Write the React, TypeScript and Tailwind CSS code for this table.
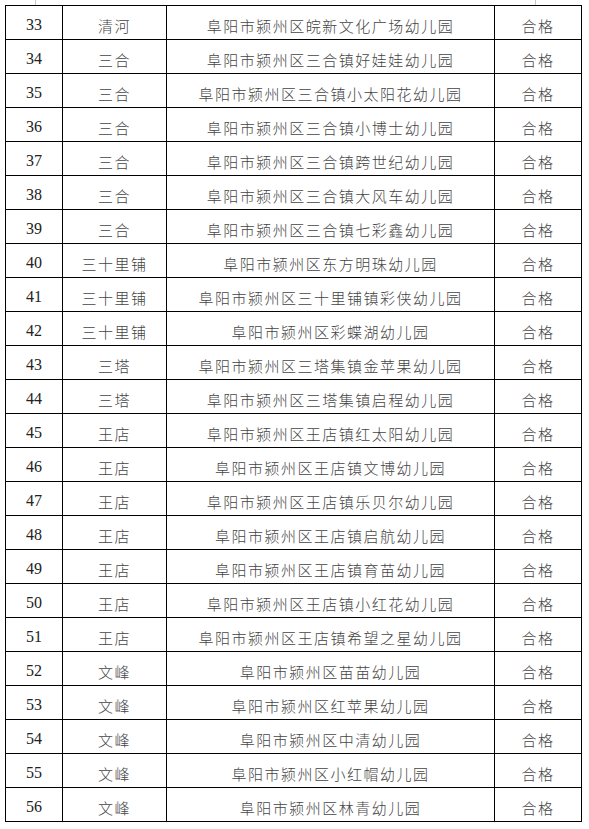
const rows: [number, string, string][] = [
  [33, "清河", "阜阳市颍州区皖新文化广场幼儿园"],
  [34, "三合", "阜阳市颍州区三合镇好娃娃幼儿园"],
  [35, "三合", "阜阳市颍州区三合镇小太阳花幼儿园"],
  [36, "三合", "阜阳市颍州区三合镇小博士幼儿园"],
  [37, "三合", "阜阳市颍州区三合镇跨世纪幼儿园"],
  [38, "三合", "阜阳市颍州区三合镇大风车幼儿园"],
  [39, "三合", "阜阳市颍州区三合镇七彩鑫幼儿园"],
  [40, "三十里铺", "阜阳市颍州区东方明珠幼儿园"],
  [41, "三十里铺", "阜阳市颍州区三十里铺镇彩侠幼儿园"],
  [42, "三十里铺", "阜阳市颍州区彩蝶湖幼儿园"],
  [43, "三塔", "阜阳市颍州区三塔集镇金苹果幼儿园"],
  [44, "三塔", "阜阳市颍州区三塔集镇启程幼儿园"],
  [45, "王店", "阜阳市颍州区王店镇红太阳幼儿园"],
  [46, "王店", "阜阳市颍州区王店镇文博幼儿园"],
  [47, "王店", "阜阳市颍州区王店镇乐贝尔幼儿园"],
  [48, "王店", "阜阳市颍州区王店镇启航幼儿园"],
  [49, "王店", "阜阳市颍州区王店镇育苗幼儿园"],
  [50, "王店", "阜阳市颍州区王店镇小红花幼儿园"],
  [51, "王店", "阜阳市颍州区王店镇希望之星幼儿园"],
  [52, "文峰", "阜阳市颍州区苗苗幼儿园"],
  [53, "文峰", "阜阳市颍州区红苹果幼儿园"],
  [54, "文峰", "阜阳市颍州区中清幼儿园"],
  [55, "文峰", "阜阳市颍州区小红帽幼儿园"],
  [56, "文峰", "阜阳市颍州区林青幼儿园"],
];

const cjk = "font-['Noto_Sans_CJK_SC',sans-serif] text-[15px] tracking-[1.5px] text-[#444] font-light";

const App = () => {
  return (
    <div className="w-[589px] h-[829px] bg-white">
      {/* page margin marks */}
      <div className="flex h-[5px]">
        <div className="ml-[35px] w-px h-full bg-[#c8c8c8]" />
        <div className="ml-[499px] w-px h-full bg-[#c8c8c8]" />
      </div>
      <table className="ml-[5px] w-[576px] table-fixed border-collapse">
        <colgroup>
          <col className="w-[57px]" />
          <col className="w-[104px]" />
          <col className="w-[328px]" />
          <col className="w-[87px]" />
        </colgroup>
        <tbody>
          {rows.map(([no, town, name]) => (
            <tr key={no} className="h-[34px]">
              <td className="border border-black text-center align-middle pt-[5px] p-0 font-['Liberation_Serif',serif] text-[16px] text-[#222] leading-none">
                {no}
              </td>
              <td className={`border border-black text-center align-middle pt-[5px] p-0 leading-none ${cjk}`}>
                {town}
              </td>
              <td className={`border border-black text-center align-middle pt-[5px] p-0 leading-none ${cjk}`}>
                {name}
              </td>
              <td className={`border border-black text-center align-middle pt-[5px] p-0 leading-none ${cjk}`}>
                合格
              </td>
            </tr>
          ))}
        </tbody>
      </table>
    </div>
  );
};

export default App;
